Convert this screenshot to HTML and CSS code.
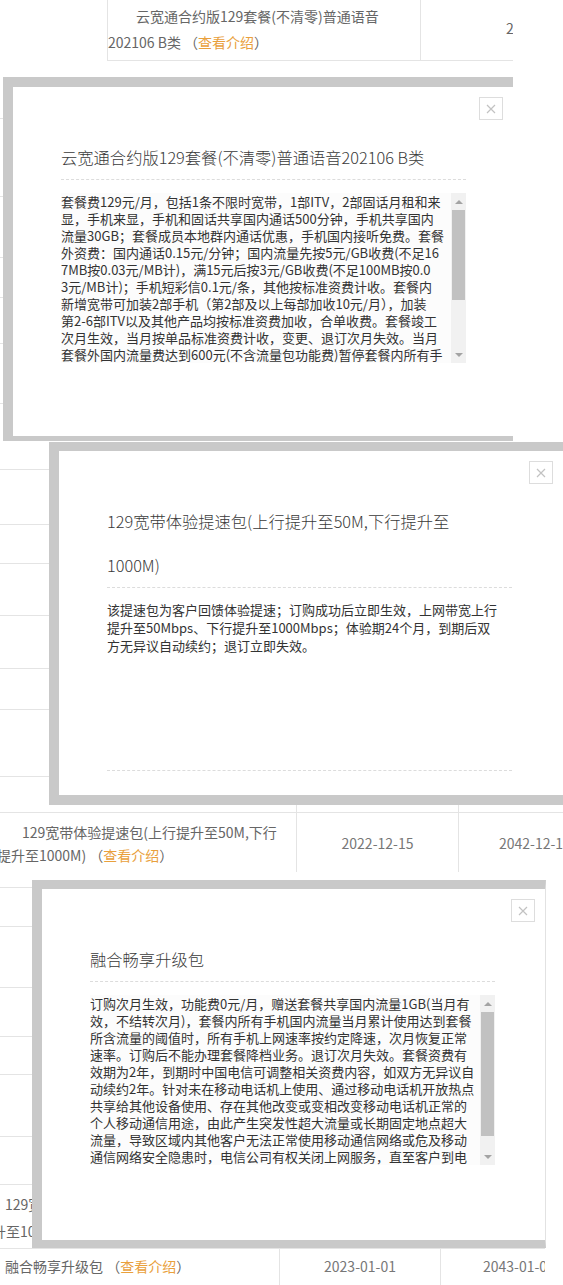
FILE: index.html
```html
<!DOCTYPE html>
<html lang="zh-CN">
<head>
  <meta charset="UTF-8">
  <title>套餐介绍</title>
  <link rel="stylesheet" href="styles.css">
</head>
<body>
  <div class="page">

    <!-- 第一段：云宽通合约版 -->
    <section class="shot shot-1">
      <div class="row row-a">
        <div class="cell"></div>
        <div class="cell cell-name">云宽通合约版129套餐(不清零)普通语音202106 B类 <span class="paren">（<a class="more">查看介绍</a>）</span></div>
        <div class="cell cell-clip">2022-12-15</div>
      </div>
      <div class="ghost">
        <div style="height:57px"></div>
        <div style="height:77px"></div>
        <div style="height:60px"></div>
        <div style="height:39px"></div>
        <div style="height:45px"></div>
        <div style="height:59px"></div>
      </div>

      <div class="layer layer-1">
        <button class="layer-close"><svg width="10" height="10" viewBox="0 0 10 10"><path d="M1 1L9 9M9 1L1 9"/></svg></button>
        <h3 class="layer-title">云宽通合约版129套餐(不清零)普通语音202106 B类</h3>
        <div class="layer-scroll">
          <div class="layer-text">
            套餐费129元/月，包括1条不限时宽带，1部ITV，2部固话月租和来<br>
            显，手机来显，手机和固话共享国内通话500分钟，手机共享国内<br>
            流量30GB；套餐成员本地群内通话优惠，手机国内接听免费。套餐<br>
            外资费：国内通话0.15元/分钟；国内流量先按5元/GB收费(不足16<br>
            7MB按0.03元/MB计)，满15元后按3元/GB收费(不足100MB按0.0<br>
            3元/MB计)；手机短彩信0.1元/条，其他按标准资费计收。套餐内<br>
            新增宽带可加装2部手机（第2部及以上每部加收10元/月），加装<br>
            第2-6部ITV以及其他产品均按标准资费加收，合单收费。套餐竣工<br>
            次月生效，当月按单品标准资费计收，变更、退订次月失效。当月<br>
            套餐外国内流量费达到600元(不含流量包功能费)暂停套餐内所有手
          </div>
          <div class="scrollbar">
            <span class="sb-btn sb-up"></span>
            <span class="sb-track"><span class="sb-thumb" style="height:90px"></span></span>
            <span class="sb-btn sb-down"></span>
          </div>
        </div>
      </div>
    </section>

    <!-- 第二段：宽带体验提速包 -->
    <section class="shot shot-2">
      <div class="ghost ghost-wide">
        <div style="height:28px"></div>
        <div style="height:54px"></div>
        <div style="height:38px"></div>
        <div style="height:51px"></div>
        <div style="height:52px"></div>
        <div style="height:40px"></div>
        <div style="height:66px"></div>
      </div>
      <div class="stubs stubs-b">
        <div></div><div></div><div></div>
      </div>
      <div class="row row-b">
        <div class="cell cell-long">129宽带体验提速包(上行提升至50M,下行提升至1000M) <span class="paren">（<a class="more">查看介绍</a>）</span></div>
        <div class="cell cell-date">2022-12-15</div>
        <div class="cell cell-date">2042-12-15</div>
      </div>

      <div class="layer layer-2">
        <button class="layer-close"><svg width="10" height="10" viewBox="0 0 10 10"><path d="M1 1L9 9M9 1L1 9"/></svg></button>
        <h3 class="layer-title">129宽带体验提速包(上行提升至50M,下行提升至1000M)</h3>
        <div class="layer-plain">
          该提速包为客户回馈体验提速；订购成功后立即生效，上网带宽上行<br>
          提升至50Mbps、下行提升至1000Mbps；体验期24个月，到期后双<br>
          方无异议自动续约；退订立即失效。
        </div>
      </div>
    </section>

    <!-- 第三段：融合畅享升级包 -->
    <section class="shot shot-3">
      <div class="ghost">
        <div style="height:9px"></div>
        <div style="height:38px"></div>
        <div style="height:60px"></div>
        <div style="height:48px"></div>
        <div style="height:37px"></div>
        <div style="height:61px"></div>
        <div style="height:47px"></div>
      </div>
      <div class="cell-prev">129宽带体验提速包(上行提升至50M,下行提升至1000M)</div>
      <div class="stubs stubs-c">
        <div></div><div></div><div></div>
      </div>
      <div class="row row-c">
        <div class="cell cell-short">融合畅享升级包 <span class="paren">（<a class="more">查看介绍</a>）</span></div>
        <div class="cell cell-date">2023-01-01</div>
        <div class="cell cell-date">2043-01-01</div>
      </div>

      <div class="layer layer-3">
        <button class="layer-close"><svg width="10" height="10" viewBox="0 0 10 10"><path d="M1 1L9 9M9 1L1 9"/></svg></button>
        <h3 class="layer-title">融合畅享升级包</h3>
        <div class="layer-scroll">
          <div class="layer-text">
            订购次月生效，功能费0元/月，赠送套餐共享国内流量1GB(当月有<br>
            效，不结转次月)，套餐内所有手机国内流量当月累计使用达到套餐<br>
            所含流量的阈值时，所有手机上网速率按约定降速，次月恢复正常<br>
            速率。订购后不能办理套餐降档业务。退订次月失效。套餐资费有<br>
            效期为2年，到期时中国电信可调整相关资费内容，如双方无异议自<br>
            动续约2年。针对未在移动电话机上使用、通过移动电话机开放热点<br>
            共享给其他设备使用、存在其他改变或变相改变移动电话机正常的<br>
            个人移动通信用途，由此产生突发性超大流量或长期固定地点超大<br>
            流量，导致区域内其他客户无法正常使用移动通信网络或危及移动<br>
            通信网络安全隐患时，电信公司有权关闭上网服务，直至客户到电
          </div>
          <div class="scrollbar">
            <span class="sb-btn sb-up"></span>
            <span class="sb-track"><span class="sb-thumb" style="height:124px"></span></span>
            <span class="sb-btn sb-down"></span>
          </div>
        </div>
      </div>
    </section>

  </div>
</body>
</html>
```

FILE: styles.css
```css
body {
  margin: 0;
  background: #fff;
  font-family: "Noto Sans CJK SC", "Microsoft YaHei", sans-serif;
  color: #333;
}

.page {
  width: 563px;
  overflow: hidden;
}

.shot {
  position: relative;
}

.shot-1 { height: 441px; }
.shot-2 { height: 437px; }
.shot-3 { height: 407px; }

/* 背后的表格 */
.row {
  display: grid;
  font-size: 14px;
  color: #666;
}

.cell {
  box-sizing: border-box;
}

.row-a {
  grid-template-columns: 107px 313px 93px;
  width: 513px;
  height: 61px;
  overflow: hidden;
}

.row-a .cell + .cell {
  border-left: 1px solid #e4e4e4;
  border-bottom: 1px solid #e4e4e4;
}

.cell-name {
  padding: 3px 10px 0 0;
  line-height: 26px;
  text-indent: 28px;
}

.cell-clip {
  padding-left: 85px;
  padding-top: 18px;
  white-space: nowrap;
}

.paren {
  color: #666;
}

.more {
  color: #e9a03c;
  text-decoration: none;
}

.ghost {
  width: 40px;
}

.ghost-wide {
  width: 49px;
}

.ghost div {
  border-bottom: 1px solid #e4e4e4;
}

.stubs {
  display: grid;
  height: 7px;
}

.stubs div + div {
  border-left: 1px solid #e4e4e4;
}

.stubs-b {
  grid-template-columns: 296px 162px 1fr;
  margin-top: 28px;
}

.row-b {
  grid-template-columns: 296px 162px 1fr;
  height: 59px;
  border-top: 1px solid #e4e4e4;
}

.row-b .cell + .cell,
.row-c .cell + .cell {
  border-left: 1px solid #e4e4e4;
}

.cell-long {
  margin-left: -3px;
  padding: 8px 12px 0 0;
  line-height: 23px;
  text-indent: 25px;
}

.cell-date {
  padding-top: 20px;
  text-align: center;
  white-space: nowrap;
  color: #777;
}

.row-b .cell:last-child {
  text-align: left;
  padding-left: 40px;
}

.cell-prev {
  width: 290px;
  margin-left: -22px;
  padding-top: 6px;
  font-size: 14px;
  line-height: 27px;
  text-indent: 27px;
  color: #666;
  height: 56px;
  box-sizing: border-box;
}

.stubs-c {
  grid-template-columns: 279px 161px 1fr;
  width: 545px;
}

.row-c {
  grid-template-columns: 279px 161px 1fr;
  width: 545px;
  height: 36px;
  overflow: hidden;
  border-top: 1px solid #e4e4e4;
}

.cell-short {
  padding: 7px 0 0 5px;
  white-space: nowrap;
}

.row-c .cell-date {
  padding-top: 7px;
}

.row-c .cell:last-child {
  text-align: left;
  padding-left: 42px;
}

/* 弹层 */
.layer {
  position: absolute;
  box-sizing: border-box;
  background: #fff;
  border: 0 solid #c9c9c9;
  padding: 48px 0 0 48px;
}

.layer-1 {
  left: 3px;
  top: 77px;
  width: 510px;
  height: 364px;
  border-width: 10px 0 5px 10px;
}

.layer-2 {
  left: 49px;
  top: 1px;
  width: 514px;
  height: 363px;
  border-width: 9px 0 10px 10px;
}

.layer-3 {
  left: 32px;
  top: 2px;
  width: 514px;
  height: 368px;
  border-width: 9px 0 8px 10px;
  border-right: 1px solid #e2e2e2;
}

.layer-close {
  position: absolute;
  top: 10px;
  right: 10px;
  width: 24px;
  height: 23px;
  padding: 0;
  border: 1px solid #ddd;
  background: #fff;
  display: flex;
  align-items: center;
  justify-content: center;
}

.layer-close path {
  stroke: #c2c2c2;
  stroke-width: 1.2;
}

.layer-title {
  margin: 0;
  width: 405px;
  box-sizing: border-box;
  padding-right: 25px;
  font-size: 16.3px;
  font-weight: 300;
  line-height: 44px;
  color: #3a3a3a;
  border-bottom: 1px dashed #dcdcdc;
}

.layer-scroll {
  display: flex;
  width: 405px;
  height: 170px;
  margin-top: 13px;
  background: #fcfcfc;
}

.layer-text {
  flex: 1;
  overflow: hidden;
  font-size: 13px;
  line-height: 17px;
  white-space: nowrap;
}

.layer-plain {
  box-sizing: border-box;
  width: 405px;
  height: 170px;
  margin-top: 13px;
  font-size: 13px;
  line-height: 18px;
  white-space: nowrap;
  border-bottom: 1px dashed #dcdcdc;
}

.scrollbar {
  width: 15px;
  display: flex;
  flex-direction: column;
  background: #f1f1f1;
}

.sb-btn {
  height: 17px;
  display: flex;
  align-items: center;
  justify-content: center;
}

.sb-up::before,
.sb-down::before {
  content: "";
  border-left: 4px solid transparent;
  border-right: 4px solid transparent;
}

.sb-up::before {
  border-bottom: 4px solid #a3a3a3;
}

.sb-down::before {
  border-top: 4px solid #a3a3a3;
}

.sb-track {
  flex: 1;
}

.sb-thumb {
  display: block;
  margin: 0 1px;
  background: #c1c1c1;
}
```
